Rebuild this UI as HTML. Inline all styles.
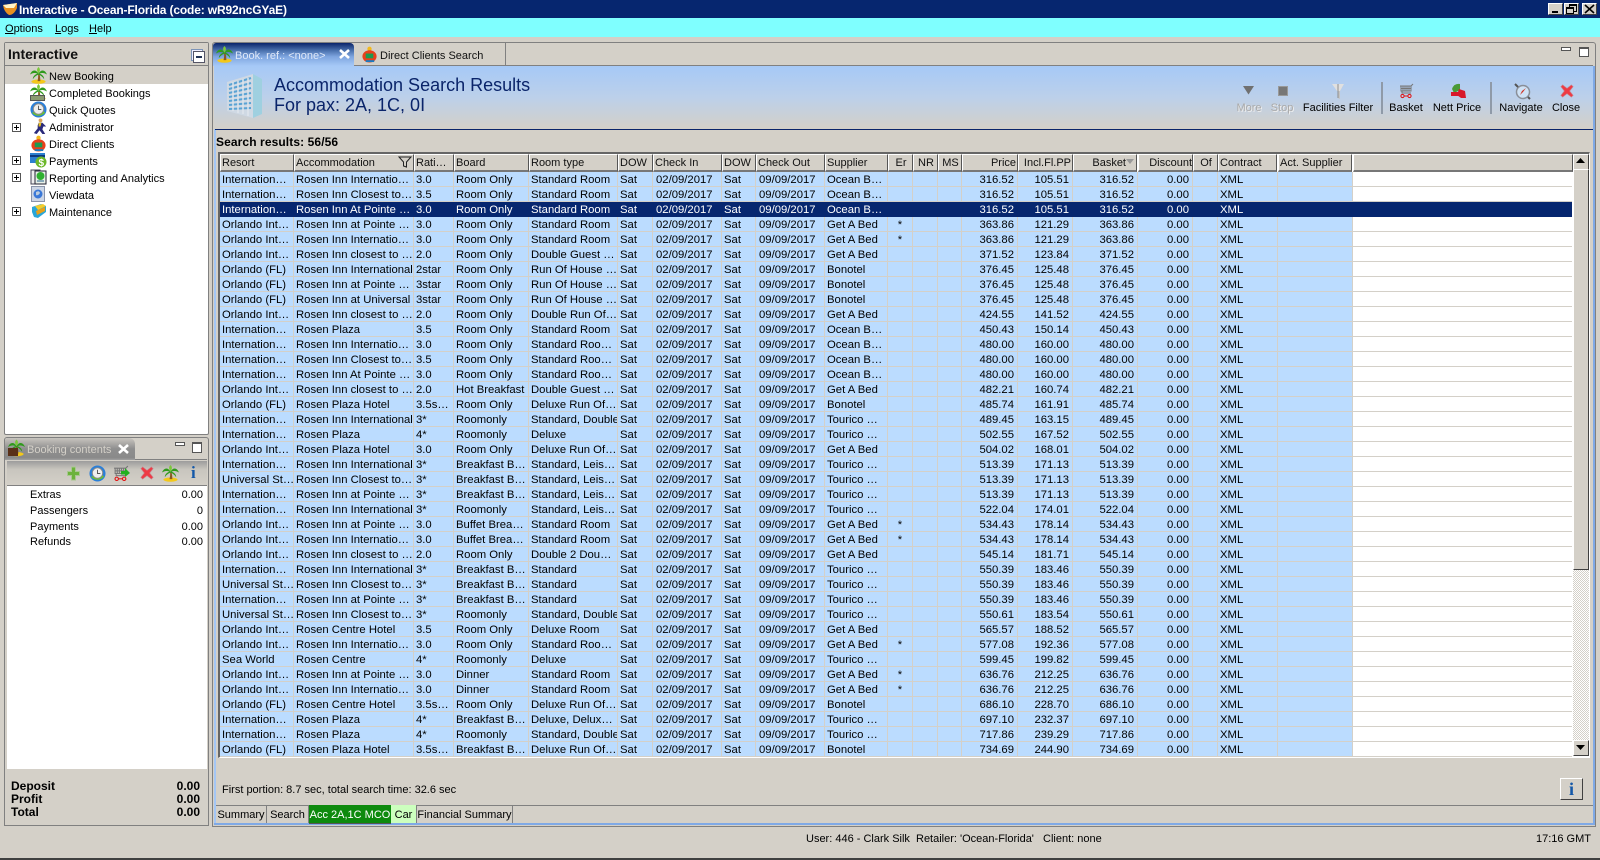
<!DOCTYPE html>
<html><head><meta charset="utf-8"><title>Interactive</title>
<style>
html,body{margin:0;padding:0}
body{width:1600px;height:860px;position:relative;overflow:hidden;background:#d4d0c8;font:11px/15px "Liberation Sans",sans-serif;color:#000}
.a{position:absolute;white-space:nowrap}
.i{position:absolute;overflow:visible}
u{text-decoration:underline}
.wb{position:absolute;top:3px;width:13px;height:10px;background:#d4d0c8;border:1px solid;border-color:#fff #404040 #404040 #fff}
.pl{position:absolute;left:12px;width:7px;height:7px;border:1px solid #555;background:#fff}
.pl:before{content:"";position:absolute;left:1px;top:3px;width:5px;height:1px;background:#000}
.pl:after{content:"";position:absolute;left:3px;top:1px;width:1px;height:5px;background:#000}
.tr{position:absolute;left:49px;white-space:nowrap;height:17px;line-height:19px}
.tbl{position:absolute;left:220px;top:172px;border-collapse:separate;border-spacing:0;table-layout:fixed;width:1352px;font-size:11.3px}
.tbl td{height:12px;padding:2px 0 0 2px;border-right:1px solid #d4d0c8;border-bottom:1px solid #d4d0c8;background:#bbdcff;overflow:hidden;white-space:nowrap;line-height:12px;box-sizing:content-box}
.tbl td:nth-child(21){background:#fff;border-right:0}
.tbl td:nth-child(7),.tbl td:nth-child(9){padding-left:3px}
.tbl td:nth-child(14),.tbl td:nth-child(15),.tbl td:nth-child(16),.tbl td:nth-child(17){text-align:right;padding:2px 3px 0 0}
.tbl td:nth-child(11){text-align:center;padding:2px 0 0}
.tbl tr.s td{background:#06266f;color:#fff;border-color:#06266f}
.h{position:absolute;top:154px;height:15px;line-height:17px;background:#d4d0c8;border-top:1px solid #fff;border-left:1px solid #fff;border-right:1px solid #555;border-bottom:2px solid #777;box-sizing:content-box;padding:0 0 0 1px;overflow:hidden;white-space:nowrap;color:#111}
.tl{position:absolute;top:101px;white-space:nowrap;transform:translateX(-50%)}
.dis{color:#aaa;text-shadow:1px 1px 0 #eee}
.bt{position:absolute;top:805px;height:18px;line-height:20px;border-right:1px solid #808080;text-align:center;white-space:nowrap}
</style></head><body>
<svg width="0" height="0" style="position:absolute">
<symbol id="palm" viewBox="0 0 18 18"><ellipse cx="9" cy="15.500" rx="7.500" ry="2.200" fill="#f3c81a"/><path d="M8 15 Q9 10 8.500 7 L10 7 Q11 11 11 15Z" fill="#8a5a20"/><path d="M9 7 C6 2 2 3 0 8 C3 6 5 6 8 7 C5 8 3 10 3 13 C5 10 7 9 9 8 C11 9 13 10 15 13 C15 10 13 8 10 7 C13 6 15 6 18 8 C16 3 12 2 9 7Z" fill="#2f9a1c"/><path d="M9 7 C7 4 7 2 9 0 C11 2 11 4 9 7Z" fill="#7cc83a"/></symbol>
<symbol id="clock" viewBox="0 0 18 18"><circle cx="9" cy="9" r="8.500" fill="#2b7fd8"/><path d="M2 12 A8.500 8.500 0 0 0 16 12 L13 10 A5 5 0 0 1 6 12Z" fill="#6cc42a"/><circle cx="9" cy="8.500" r="5.500" fill="#eee" stroke="#888"/><path d="M9 5V9H12" stroke="#555" fill="none"/></symbol>
<symbol id="xr" viewBox="0 0 16 16"><path d="M3 1 L8 5 L13 1 L15 3 L11 8 L15 13 L13 15 L8 11 L3 15 L1 13 L5 8 L1 3Z" fill="#ee3a44" stroke="#c8808a" stroke-width=".7"/></symbol>
<symbol id="cart" viewBox="0 0 16 16"><path d="M1 3H12L14 1M2 3V8H12V3M4 3V8M6 3V8M8 3V8M10 3V8M2 5.500H12M3 8L3 10H12" fill="none" stroke="#777" stroke-width="1"/><circle cx="3.500" cy="13" r="1.600" fill="none" stroke="#e01010" stroke-width="1"/><circle cx="10.500" cy="13" r="1.600" fill="none" stroke="#e01010" stroke-width="1"/><path d="M5 13H9" stroke="#e01010"/></symbol>
<symbol id="person" viewBox="0 0 18 18"><circle cx="9" cy="2.500" r="2" fill="#d9a35a"/><path d="M7 5 L11 5 L15 9 L12 9 L11 12 L14 17 L11 17 L8 13 L5 17 L2 16 L6 11 L6 8Z" fill="#2a2a7a"/><path d="M7 5 L10 5 L9 9 L7 9Z" fill="#e8c020"/></symbol>
<symbol id="client" viewBox="0 0 18 18"><circle cx="9" cy="3" r="2.300" fill="#f2b81c"/><ellipse cx="9" cy="11" rx="7.500" ry="6.500" fill="#e8401c"/><rect x="5" y="8" width="8" height="5" fill="#1c9a50"/><rect x="5" y="15" width="9" height="2" fill="#1a7ac0"/></symbol>
<symbol id="hotel" viewBox="0 0 36 46"><path d="M0 9 L26 1 L26 45 L0 38Z" fill="#cfd9e4"/><path d="M26 1 L35 6 L35 41 L26 45Z" fill="#9fd0e0"/><path d="M2 12 24 5M2 16 24 10M2 20 24 15M2 24 24 20M2 28 24 25M2 32 24 30M2 36 24 35" stroke="#5aa3d4" stroke-width="2" fill="none"/><path d="M6 9V38M11 8V40M16 6V41M21 5V43" stroke="#dfe6ec" stroke-width="1.500" fill="none"/></symbol>
</svg>

<div class="a" style="left:0;top:0;width:1600px;height:18px;background:#06266f"></div>
<svg class="i" style="left:2px;top:2px" width="16" height="14" viewBox="0 0 16 14"><path d="M1 3 L15 1 L15 6 Q12 13 7 13 Q2 10 1 3Z" fill="#e89020"/><path d="M1 3 L15 1 L12 6 L4 6Z" fill="#fff3c8"/></svg>
<div class="a" style="left:19px;top:1px;color:#fff;font:bold 12px/18px 'Liberation Sans',sans-serif;letter-spacing:-.15px">Interactive - Ocean-Florida (code: wR92ncGYaE)</div>
<div class="wb" style="left:1548px"><div style="position:absolute;left:3px;top:7px;width:6px;height:2px;background:#000"></div></div>
<div class="wb" style="left:1564px"><div style="position:absolute;left:4px;top:0;width:6px;height:5px;border:1px solid #000;border-top-width:2px"></div><div style="position:absolute;left:1px;top:3px;width:6px;height:4px;border:1px solid #000;border-top-width:2px;background:#d4d0c8"></div></div>
<div class="wb" style="left:1582px"><svg class="i" style="left:2px;top:1px" width="9" height="8"><path d="M0 0L9 8M9 0L0 8" stroke="#000" stroke-width="1.600"/></svg></div>

<div class="a" style="left:0;top:18px;width:1600px;height:19px;background:#7fffff"></div>
<div class="a" style="left:5px;top:22px"><u>O</u>ptions</div>
<div class="a" style="left:55px;top:22px"><u>L</u>ogs</div>
<div class="a" style="left:89px;top:22px"><u>H</u>elp</div>

<!-- Left top panel -->
<div class="a" style="left:4px;top:42px;width:203px;height:391px;background:#fff;border:1px solid #808080;border-radius:2px"></div>
<div class="a" style="left:5px;top:43px;width:203px;height:22px;background:#d4d0c8;border-bottom:1px solid #808080"></div>
<div class="a" style="left:8px;top:46px;font:bold 14px/17px 'Liberation Sans',sans-serif;color:#111">Interactive</div>
<div class="a" style="left:191px;top:49px;width:10px;height:10px;border:1px solid #7c94b8;background:#eef"></div>
<div class="a" style="left:193px;top:51px;width:10px;height:10px;border:1px solid #556;background:#fff"><div style="position:absolute;left:2px;top:4px;width:6px;height:2px;background:#235"></div></div>
<div class="a" style="left:5px;top:66px;width:203px;height:18px;background:#d4d0c8"></div>
<svg class="i" style="left:30px;top:67px" width="17" height="17"><use href="#palm"/></svg>
<div class="tr" style="top:68px">New Booking</div>
<svg class="i" style="left:30px;top:84px" width="17" height="17"><use href="#palm"/></svg><div class="a" style="left:30px;top:95px;width:15px;height:6px;background:#8a9a70;border:1px solid #555;box-sizing:border-box"></div>
<div class="tr" style="top:85px">Completed Bookings</div>
<svg class="i" style="left:30px;top:101px" width="17" height="17"><use href="#clock"/></svg>
<div class="tr" style="top:102px">Quick Quotes</div>
<div class="pl" style="top:123px"></div>
<svg class="i" style="left:32px;top:118px" width="17" height="17"><use href="#person"/></svg>
<div class="tr" style="top:119px">Administrator</div>
<svg class="i" style="left:30px;top:135px" width="17" height="17"><use href="#client"/></svg>
<div class="tr" style="top:136px">Direct Clients</div>
<div class="pl" style="top:156px"></div>
<svg class="i" style="left:30px;top:152px" width="17" height="16" viewBox="0 0 17 16"><rect x="0" y="1" width="15" height="10" fill="#2a7fd0"/><rect x="0" y="3" width="15" height="2" fill="#0a3a80"/><circle cx="11" cy="10" r="5.500" fill="#6cb82a"/><text x="8.500" y="14" font-size="10" font-weight="bold" fill="#fff" font-family="Liberation Sans">$</text></svg>
<div class="tr" style="top:153px">Payments</div>
<div class="pl" style="top:173px"></div>
<svg class="i" style="left:31px;top:169px" width="16" height="16"><rect x="0" y="1" width="9" height="14" fill="#eee" stroke="#445"/><rect x="4" y="2" width="11" height="13" fill="#e8f0e8" stroke="#223"/><circle cx="9.500" cy="7" r="4" fill="#2fb030"/><rect x="6" y="11" width="7" height="2" fill="#8ab"/></svg>
<div class="tr" style="top:170px">Reporting and Analytics</div>
<svg class="i" style="left:31px;top:186px" width="15" height="16"><rect x=".5" y=".5" width="13" height="15" fill="#cdd6e6" stroke="#8a94aa"/><circle cx="7" cy="8" r="4.500" fill="#3a78d8"/><path d="M5 6 Q8 4 9 7 Q7 10 5 9Z" fill="#bcd"/></svg>
<div class="tr" style="top:187px">Viewdata</div>
<div class="pl" style="top:207px"></div>
<svg class="i" style="left:31px;top:203px" width="16" height="16"><path d="M1 4 L10 1 L15 3 L15 9 L7 15 L3 14 L1 9Z" fill="#2aa6d8"/><path d="M4 3 L12 1 L15 3 L7 7Z" fill="#f4cc2a"/><path d="M5 8 L14 4 L14 8 L6 12Z" fill="#e8a018"/></svg>
<div class="tr" style="top:204px">Maintenance</div>

<!-- Left bottom panel -->
<div class="a" style="left:4px;top:437px;width:203px;height:387px;background:#d4d0c8;border:1px solid #808080;border-radius:3px 3px 0 0"></div>
<div class="a" style="left:5px;top:438px;width:130px;height:22px;background:linear-gradient(#c8c5bf,#8e8e8e 50%,#8a8a8a 90%,#a0a0a0);border-radius:2px 6px 0 0"></div>
<svg class="i" style="left:8px;top:439px" width="17" height="18"><use href="#palm"/><rect x="0" y="9" width="10" height="8" fill="#5a3018"/></svg>
<div class="a" style="left:27px;top:443px;color:#d4d0c8">Booking contents</div>
<svg class="i" style="left:118px;top:444px" width="11" height="10"><path d="M1 1L10 9M10 1L1 9" stroke="#fff" stroke-width="2.600"/></svg>
<div class="a" style="left:135px;top:459px;width:72px;height:1px;background:#808080"></div>
<div class="a" style="left:175px;top:442px;width:8px;height:2px;border:1px solid #555;background:#fff"></div>
<div class="a" style="left:192px;top:442px;width:8px;height:8px;border:1px solid #555;border-top-width:2px;background:#fff"></div>
<div class="a" style="left:7px;top:461px;width:200px;height:24px;background:linear-gradient(#9c9c9c,#c8c5be 35%,#d4d0c8);border-bottom:1px solid #808080"></div>
<svg class="i" style="left:67px;top:466px" width="13" height="15"><path d="M4.500 1H8.500V5.500H12.500V9.500H8.500V14H4.500V9.500H.5V5.500H4.500Z" fill="#6cb23c" stroke="#a8c890"/></svg>
<svg class="i" style="left:89px;top:465px" width="17" height="17"><use href="#clock"/></svg>
<svg class="i" style="left:113px;top:465px" width="17" height="17"><use href="#cart"/><path d="M8 6H12V3L17 8L12 12V9.500H8Z" fill="#22b020"/></svg>
<svg class="i" style="left:140px;top:466px" width="14" height="14"><use href="#xr"/></svg>
<svg class="i" style="left:162px;top:465px" width="17" height="17"><use href="#palm"/></svg>
<div class="a" style="left:191px;top:464px;color:#1458a8;font:bold 17px/18px 'Liberation Serif',serif">i</div>
<div class="a" style="left:7px;top:486px;width:200px;height:283px;background:#fff"></div>
<div class="a" style="left:30px;top:488px">Extras</div><div class="a" style="right:1397px;top:488px">0.00</div>
<div class="a" style="left:30px;top:504px">Passengers</div><div class="a" style="right:1397px;top:504px">0</div>
<div class="a" style="left:30px;top:520px">Payments</div><div class="a" style="right:1397px;top:520px">0.00</div>
<div class="a" style="left:30px;top:535px">Refunds</div><div class="a" style="right:1397px;top:535px">0.00</div>
<div class="a" style="left:11px;top:780px;font:bold 12px/13px 'Liberation Sans',sans-serif">Deposit<br>Profit<br>Total</div>
<div class="a" style="right:1400px;top:780px;font:bold 12px/13px 'Liberation Sans',sans-serif;text-align:right">0.00<br>0.00<br>0.00</div>

<!-- Right panel -->
<div class="a" style="left:212px;top:42px;width:1382px;height:783px;background:#d4d0c8;border:1px solid #808080;border-radius:3px 3px 0 0"></div>
<div class="a" style="left:213px;top:65px;width:1380px;height:1px;background:#808080"></div>
<div class="a" style="left:214px;top:66px;width:2px;height:758px;background:#a3c6f5"></div>
<div class="a" style="left:1593px;top:66px;width:2px;height:759px;background:#7fa9e6"></div>
<div class="a" style="left:214px;top:823px;width:1381px;height:2px;background:#7fa9e6"></div>
<div class="a" style="left:214px;top:66px;width:1379px;height:63px;background:linear-gradient(#a6c9f7,#bcd0ea 50%,#d4d0c8)"></div>
<div class="a" style="left:215px;top:129px;width:1378px;height:1px;background:#0a246a"></div>
<!-- tabs -->
<div class="a" style="left:213px;top:43px;width:141px;height:23px;background:linear-gradient(#0a246a,#456ba8 30%,#7fa6e0 60%,#a6c9f7);border-radius:3px 4px 0 0"></div>
<svg class="i" style="left:216px;top:46px" width="17" height="17"><use href="#palm"/></svg>
<div class="a" style="left:235px;top:49px;color:#dfe8f8">Book. ref.: &lt;none&gt;</div>
<svg class="i" style="left:339px;top:49px" width="11" height="10"><path d="M1 1L10 9M10 1L1 9" stroke="#fff" stroke-width="2.600"/></svg>
<div class="a" style="left:505px;top:43px;width:1px;height:22px;background:#808080"></div>
<svg class="i" style="left:361px;top:46px" width="17" height="17"><use href="#client"/></svg>
<div class="a" style="left:380px;top:49px;color:#111">Direct Clients Search</div>
<div class="a" style="left:1561px;top:47px;width:8px;height:2px;border:1px solid #555;background:#fff"></div>
<div class="a" style="left:1579px;top:47px;width:8px;height:7px;border:1px solid #555;border-top-width:2px;background:#fff"></div>
<!-- heading -->
<svg class="i" style="left:227px;top:73px" width="36" height="46"><use href="#hotel"/></svg>
<div class="a" style="left:274px;top:74px;color:#0a246a;font:18px/22px 'Liberation Sans',sans-serif">Accommodation Search Results</div>
<div class="a" style="left:274px;top:94px;color:#0a246a;font:18px/22px 'Liberation Sans',sans-serif">For pax: 2A, 1C, 0I</div>
<!-- toolbar -->
<svg class="i" style="left:1243px;top:85px" width="12" height="10"><path d="M0 1H11L5.500 9.500Z" fill="#707070"/></svg>
<div class="a" style="left:1278px;top:86px;width:8px;height:8px;background:#777;border:1px solid #999"></div>
<svg class="i" style="left:1332px;top:83px" width="13" height="17"><path d="M0 1H12L8 8V16L5.500 15V8Z" fill="#c4c4c4"/><path d="M0 1H12L8 8H5Z" fill="#e0e0e0"/><path d="M6 1V15" stroke="#8e8e8e"/></svg>
<svg class="i" style="left:1399px;top:83px" width="16" height="16"><use href="#cart"/></svg>
<svg class="i" style="left:1450px;top:83px" width="17" height="17" viewBox="0 0 17 17"><path d="M2 6 Q4 0 10 1 L10 7 L4 10Z" fill="#4a9a36"/><rect x="1" y="9" width="8" height="4" fill="#d8182a"/><path d="M9 6 L15 8 L16 15 L11 15 L7 12Z" fill="#d8182a"/></svg>
<svg class="i" style="left:1514px;top:83px" width="17" height="17" viewBox="0 0 17 17"><circle cx="9" cy="9" r="6.500" fill="#cfe2f5" stroke="#8a8f98" stroke-width="1.500"/><path d="M12 5 L9 9 L6 12 L8 8Z" fill="#d03020"/><path d="M1 1 L4 4M14 14 L16 16" stroke="#555" stroke-width="2"/></svg>
<svg class="i" style="left:1560px;top:84px" width="14" height="14"><use href="#xr"/></svg>
<div class="tl dis" style="left:1249px">More</div>
<div class="tl dis" style="left:1282px">Stop</div>
<div class="tl" style="left:1338px">Facilities Filter</div>
<div class="a" style="left:1381px;top:82px;width:2px;height:32px;background:#8f9aa8"></div>
<div class="tl" style="left:1406px">Basket</div>
<div class="tl" style="left:1457px">Nett Price</div>
<div class="a" style="left:1490px;top:82px;width:2px;height:32px;background:#8f9aa8"></div>
<div class="tl" style="left:1521px">Navigate</div>
<div class="tl" style="left:1566px">Close</div>

<div class="a" style="left:216px;top:135px;font:bold 12px/15px 'Liberation Sans',sans-serif;letter-spacing:.1px">Search results: 56/56</div>

<!-- table frame -->
<div class="a" style="left:218px;top:152px;width:1372px;height:606px;background:#fff;border-top:2px solid #666;border-left:2px solid #666;border-right:1px solid #fff;border-bottom:1px solid #fff;box-sizing:border-box"></div>

<div class="h" style="left:220px;width:71px">Resort</div>
<div class="h" style="left:294px;width:117px">Accommodation</div>
<svg class="i" style="left:398px;top:156px" width="14" height="12"><path d="M1 1H13L8.500 6V11L5.500 10V6Z" fill="none" stroke="#222"/></svg>
<div class="h" style="left:414px;width:37px">Rati…</div>
<div class="h" style="left:454px;width:72px">Board</div>
<div class="h" style="left:529px;width:86px">Room type</div>
<div class="h" style="left:618px;width:32px">DOW</div>
<div class="h" style="left:653px;width:66px">Check In</div>
<div class="h" style="left:722px;width:31px">DOW</div>
<div class="h" style="left:756px;width:66px">Check Out</div>
<div class="h" style="left:825px;width:60px">Supplier</div>
<div class="h" style="left:888px;width:22px;text-align:center">Er</div>
<div class="h" style="left:913px;width:22px;text-align:center">NR</div>
<div class="h" style="left:938px;width:21px;text-align:center">MS</div>
<div class="h" style="left:962px;width:52px;text-align:right;padding-right:1px">Price</div>
<div class="h" style="left:1018px;width:51px;text-align:right;padding-right:1px">Incl.Fl.PP</div>
<div class="h" style="left:1073px;text-align:right;padding-right:10px;width:51px">Basket</div>
<svg class="i" style="left:1126px;top:159px" width="9" height="6"><path d="M0 0H8L4 5Z" fill="#999"/></svg>
<div class="h" style="left:1138px;width:52px;text-align:right">Discount</div>
<div class="h" style="left:1193px;width:22px;text-align:center">Of</div>
<div class="h" style="left:1218px;width:56px">Contract</div>
<div class="h" style="left:1278px;width:71px">Act. Supplier</div>
<div class="h" style="left:1353px;width:217px"></div>

<table class="tbl">
<colgroup><col style="width:74px"><col style="width:120px"><col style="width:40px"><col style="width:75px"><col style="width:89px"><col style="width:35px"><col style="width:69px"><col style="width:34px"><col style="width:69px"><col style="width:63px"><col style="width:25px"><col style="width:25px"><col style="width:24px"><col style="width:56px"><col style="width:55px"><col style="width:65px"><col style="width:55px"><col style="width:25px"><col style="width:60px"><col style="width:75px"><col style="width:219px"></colgroup>
<tr><td>Internation…</td><td>Rosen Inn Internatio…</td><td>3.0</td><td>Room Only</td><td>Standard Room</td><td>Sat</td><td>02/09/2017</td><td>Sat</td><td>09/09/2017</td><td>Ocean B…</td><td></td><td></td><td></td><td>316.52</td><td>105.51</td><td>316.52</td><td>0.00</td><td></td><td>XML</td><td></td><td></td></tr>
<tr><td>Internation…</td><td>Rosen Inn Closest to…</td><td>3.5</td><td>Room Only</td><td>Standard Room</td><td>Sat</td><td>02/09/2017</td><td>Sat</td><td>09/09/2017</td><td>Ocean B…</td><td></td><td></td><td></td><td>316.52</td><td>105.51</td><td>316.52</td><td>0.00</td><td></td><td>XML</td><td></td><td></td></tr>
<tr class="s"><td>Internation…</td><td>Rosen Inn At Pointe …</td><td>3.0</td><td>Room Only</td><td>Standard Room</td><td>Sat</td><td>02/09/2017</td><td>Sat</td><td>09/09/2017</td><td>Ocean B…</td><td></td><td></td><td></td><td>316.52</td><td>105.51</td><td>316.52</td><td>0.00</td><td></td><td>XML</td><td></td><td></td></tr>
<tr><td>Orlando Int…</td><td>Rosen Inn at Pointe …</td><td>3.0</td><td>Room Only</td><td>Standard Room</td><td>Sat</td><td>02/09/2017</td><td>Sat</td><td>09/09/2017</td><td>Get A Bed</td><td>*</td><td></td><td></td><td>363.86</td><td>121.29</td><td>363.86</td><td>0.00</td><td></td><td>XML</td><td></td><td></td></tr>
<tr><td>Orlando Int…</td><td>Rosen Inn Internatio…</td><td>3.0</td><td>Room Only</td><td>Standard Room</td><td>Sat</td><td>02/09/2017</td><td>Sat</td><td>09/09/2017</td><td>Get A Bed</td><td>*</td><td></td><td></td><td>363.86</td><td>121.29</td><td>363.86</td><td>0.00</td><td></td><td>XML</td><td></td><td></td></tr>
<tr><td>Orlando Int…</td><td>Rosen Inn closest to …</td><td>2.0</td><td>Room Only</td><td>Double Guest …</td><td>Sat</td><td>02/09/2017</td><td>Sat</td><td>09/09/2017</td><td>Get A Bed</td><td></td><td></td><td></td><td>371.52</td><td>123.84</td><td>371.52</td><td>0.00</td><td></td><td>XML</td><td></td><td></td></tr>
<tr><td>Orlando (FL)</td><td>Rosen Inn International</td><td>2star</td><td>Room Only</td><td>Run Of House …</td><td>Sat</td><td>02/09/2017</td><td>Sat</td><td>09/09/2017</td><td>Bonotel</td><td></td><td></td><td></td><td>376.45</td><td>125.48</td><td>376.45</td><td>0.00</td><td></td><td>XML</td><td></td><td></td></tr>
<tr><td>Orlando (FL)</td><td>Rosen Inn at Pointe …</td><td>3star</td><td>Room Only</td><td>Run Of House …</td><td>Sat</td><td>02/09/2017</td><td>Sat</td><td>09/09/2017</td><td>Bonotel</td><td></td><td></td><td></td><td>376.45</td><td>125.48</td><td>376.45</td><td>0.00</td><td></td><td>XML</td><td></td><td></td></tr>
<tr><td>Orlando (FL)</td><td>Rosen Inn at Universal</td><td>3star</td><td>Room Only</td><td>Run Of House …</td><td>Sat</td><td>02/09/2017</td><td>Sat</td><td>09/09/2017</td><td>Bonotel</td><td></td><td></td><td></td><td>376.45</td><td>125.48</td><td>376.45</td><td>0.00</td><td></td><td>XML</td><td></td><td></td></tr>
<tr><td>Orlando Int…</td><td>Rosen Inn closest to …</td><td>2.0</td><td>Room Only</td><td>Double Run Of…</td><td>Sat</td><td>02/09/2017</td><td>Sat</td><td>09/09/2017</td><td>Get A Bed</td><td></td><td></td><td></td><td>424.55</td><td>141.52</td><td>424.55</td><td>0.00</td><td></td><td>XML</td><td></td><td></td></tr>
<tr><td>Internation…</td><td>Rosen Plaza</td><td>3.5</td><td>Room Only</td><td>Standard Room</td><td>Sat</td><td>02/09/2017</td><td>Sat</td><td>09/09/2017</td><td>Ocean B…</td><td></td><td></td><td></td><td>450.43</td><td>150.14</td><td>450.43</td><td>0.00</td><td></td><td>XML</td><td></td><td></td></tr>
<tr><td>Internation…</td><td>Rosen Inn Internatio…</td><td>3.0</td><td>Room Only</td><td>Standard Roo…</td><td>Sat</td><td>02/09/2017</td><td>Sat</td><td>09/09/2017</td><td>Ocean B…</td><td></td><td></td><td></td><td>480.00</td><td>160.00</td><td>480.00</td><td>0.00</td><td></td><td>XML</td><td></td><td></td></tr>
<tr><td>Internation…</td><td>Rosen Inn Closest to…</td><td>3.5</td><td>Room Only</td><td>Standard Roo…</td><td>Sat</td><td>02/09/2017</td><td>Sat</td><td>09/09/2017</td><td>Ocean B…</td><td></td><td></td><td></td><td>480.00</td><td>160.00</td><td>480.00</td><td>0.00</td><td></td><td>XML</td><td></td><td></td></tr>
<tr><td>Internation…</td><td>Rosen Inn At Pointe …</td><td>3.0</td><td>Room Only</td><td>Standard Roo…</td><td>Sat</td><td>02/09/2017</td><td>Sat</td><td>09/09/2017</td><td>Ocean B…</td><td></td><td></td><td></td><td>480.00</td><td>160.00</td><td>480.00</td><td>0.00</td><td></td><td>XML</td><td></td><td></td></tr>
<tr><td>Orlando Int…</td><td>Rosen Inn closest to …</td><td>2.0</td><td>Hot Breakfast</td><td>Double Guest …</td><td>Sat</td><td>02/09/2017</td><td>Sat</td><td>09/09/2017</td><td>Get A Bed</td><td></td><td></td><td></td><td>482.21</td><td>160.74</td><td>482.21</td><td>0.00</td><td></td><td>XML</td><td></td><td></td></tr>
<tr><td>Orlando (FL)</td><td>Rosen Plaza Hotel</td><td>3.5s…</td><td>Room Only</td><td>Deluxe Run Of…</td><td>Sat</td><td>02/09/2017</td><td>Sat</td><td>09/09/2017</td><td>Bonotel</td><td></td><td></td><td></td><td>485.74</td><td>161.91</td><td>485.74</td><td>0.00</td><td></td><td>XML</td><td></td><td></td></tr>
<tr><td>Internation…</td><td>Rosen Inn International</td><td>3*</td><td>Roomonly</td><td>Standard, Double</td><td>Sat</td><td>02/09/2017</td><td>Sat</td><td>09/09/2017</td><td>Tourico …</td><td></td><td></td><td></td><td>489.45</td><td>163.15</td><td>489.45</td><td>0.00</td><td></td><td>XML</td><td></td><td></td></tr>
<tr><td>Internation…</td><td>Rosen Plaza</td><td>4*</td><td>Roomonly</td><td>Deluxe</td><td>Sat</td><td>02/09/2017</td><td>Sat</td><td>09/09/2017</td><td>Tourico …</td><td></td><td></td><td></td><td>502.55</td><td>167.52</td><td>502.55</td><td>0.00</td><td></td><td>XML</td><td></td><td></td></tr>
<tr><td>Orlando Int…</td><td>Rosen Plaza Hotel</td><td>3.0</td><td>Room Only</td><td>Deluxe Run Of…</td><td>Sat</td><td>02/09/2017</td><td>Sat</td><td>09/09/2017</td><td>Get A Bed</td><td></td><td></td><td></td><td>504.02</td><td>168.01</td><td>504.02</td><td>0.00</td><td></td><td>XML</td><td></td><td></td></tr>
<tr><td>Internation…</td><td>Rosen Inn International</td><td>3*</td><td>Breakfast B…</td><td>Standard, Leis…</td><td>Sat</td><td>02/09/2017</td><td>Sat</td><td>09/09/2017</td><td>Tourico …</td><td></td><td></td><td></td><td>513.39</td><td>171.13</td><td>513.39</td><td>0.00</td><td></td><td>XML</td><td></td><td></td></tr>
<tr><td>Universal St…</td><td>Rosen Inn Closest to…</td><td>3*</td><td>Breakfast B…</td><td>Standard, Leis…</td><td>Sat</td><td>02/09/2017</td><td>Sat</td><td>09/09/2017</td><td>Tourico …</td><td></td><td></td><td></td><td>513.39</td><td>171.13</td><td>513.39</td><td>0.00</td><td></td><td>XML</td><td></td><td></td></tr>
<tr><td>Internation…</td><td>Rosen Inn at Pointe …</td><td>3*</td><td>Breakfast B…</td><td>Standard, Leis…</td><td>Sat</td><td>02/09/2017</td><td>Sat</td><td>09/09/2017</td><td>Tourico …</td><td></td><td></td><td></td><td>513.39</td><td>171.13</td><td>513.39</td><td>0.00</td><td></td><td>XML</td><td></td><td></td></tr>
<tr><td>Internation…</td><td>Rosen Inn International</td><td>3*</td><td>Roomonly</td><td>Standard, Leis…</td><td>Sat</td><td>02/09/2017</td><td>Sat</td><td>09/09/2017</td><td>Tourico …</td><td></td><td></td><td></td><td>522.04</td><td>174.01</td><td>522.04</td><td>0.00</td><td></td><td>XML</td><td></td><td></td></tr>
<tr><td>Orlando Int…</td><td>Rosen Inn at Pointe …</td><td>3.0</td><td>Buffet Brea…</td><td>Standard Room</td><td>Sat</td><td>02/09/2017</td><td>Sat</td><td>09/09/2017</td><td>Get A Bed</td><td>*</td><td></td><td></td><td>534.43</td><td>178.14</td><td>534.43</td><td>0.00</td><td></td><td>XML</td><td></td><td></td></tr>
<tr><td>Orlando Int…</td><td>Rosen Inn Internatio…</td><td>3.0</td><td>Buffet Brea…</td><td>Standard Room</td><td>Sat</td><td>02/09/2017</td><td>Sat</td><td>09/09/2017</td><td>Get A Bed</td><td>*</td><td></td><td></td><td>534.43</td><td>178.14</td><td>534.43</td><td>0.00</td><td></td><td>XML</td><td></td><td></td></tr>
<tr><td>Orlando Int…</td><td>Rosen Inn closest to …</td><td>2.0</td><td>Room Only</td><td>Double 2 Dou…</td><td>Sat</td><td>02/09/2017</td><td>Sat</td><td>09/09/2017</td><td>Get A Bed</td><td></td><td></td><td></td><td>545.14</td><td>181.71</td><td>545.14</td><td>0.00</td><td></td><td>XML</td><td></td><td></td></tr>
<tr><td>Internation…</td><td>Rosen Inn International</td><td>3*</td><td>Breakfast B…</td><td>Standard</td><td>Sat</td><td>02/09/2017</td><td>Sat</td><td>09/09/2017</td><td>Tourico …</td><td></td><td></td><td></td><td>550.39</td><td>183.46</td><td>550.39</td><td>0.00</td><td></td><td>XML</td><td></td><td></td></tr>
<tr><td>Universal St…</td><td>Rosen Inn Closest to…</td><td>3*</td><td>Breakfast B…</td><td>Standard</td><td>Sat</td><td>02/09/2017</td><td>Sat</td><td>09/09/2017</td><td>Tourico …</td><td></td><td></td><td></td><td>550.39</td><td>183.46</td><td>550.39</td><td>0.00</td><td></td><td>XML</td><td></td><td></td></tr>
<tr><td>Internation…</td><td>Rosen Inn at Pointe …</td><td>3*</td><td>Breakfast B…</td><td>Standard</td><td>Sat</td><td>02/09/2017</td><td>Sat</td><td>09/09/2017</td><td>Tourico …</td><td></td><td></td><td></td><td>550.39</td><td>183.46</td><td>550.39</td><td>0.00</td><td></td><td>XML</td><td></td><td></td></tr>
<tr><td>Universal St…</td><td>Rosen Inn Closest to…</td><td>3*</td><td>Roomonly</td><td>Standard, Double</td><td>Sat</td><td>02/09/2017</td><td>Sat</td><td>09/09/2017</td><td>Tourico …</td><td></td><td></td><td></td><td>550.61</td><td>183.54</td><td>550.61</td><td>0.00</td><td></td><td>XML</td><td></td><td></td></tr>
<tr><td>Orlando Int…</td><td>Rosen Centre Hotel</td><td>3.5</td><td>Room Only</td><td>Deluxe Room</td><td>Sat</td><td>02/09/2017</td><td>Sat</td><td>09/09/2017</td><td>Get A Bed</td><td></td><td></td><td></td><td>565.57</td><td>188.52</td><td>565.57</td><td>0.00</td><td></td><td>XML</td><td></td><td></td></tr>
<tr><td>Orlando Int…</td><td>Rosen Inn Internatio…</td><td>3.0</td><td>Room Only</td><td>Standard Roo…</td><td>Sat</td><td>02/09/2017</td><td>Sat</td><td>09/09/2017</td><td>Get A Bed</td><td>*</td><td></td><td></td><td>577.08</td><td>192.36</td><td>577.08</td><td>0.00</td><td></td><td>XML</td><td></td><td></td></tr>
<tr><td>Sea World</td><td>Rosen Centre</td><td>4*</td><td>Roomonly</td><td>Deluxe</td><td>Sat</td><td>02/09/2017</td><td>Sat</td><td>09/09/2017</td><td>Tourico …</td><td></td><td></td><td></td><td>599.45</td><td>199.82</td><td>599.45</td><td>0.00</td><td></td><td>XML</td><td></td><td></td></tr>
<tr><td>Orlando Int…</td><td>Rosen Inn at Pointe …</td><td>3.0</td><td>Dinner</td><td>Standard Room</td><td>Sat</td><td>02/09/2017</td><td>Sat</td><td>09/09/2017</td><td>Get A Bed</td><td>*</td><td></td><td></td><td>636.76</td><td>212.25</td><td>636.76</td><td>0.00</td><td></td><td>XML</td><td></td><td></td></tr>
<tr><td>Orlando Int…</td><td>Rosen Inn Internatio…</td><td>3.0</td><td>Dinner</td><td>Standard Room</td><td>Sat</td><td>02/09/2017</td><td>Sat</td><td>09/09/2017</td><td>Get A Bed</td><td>*</td><td></td><td></td><td>636.76</td><td>212.25</td><td>636.76</td><td>0.00</td><td></td><td>XML</td><td></td><td></td></tr>
<tr><td>Orlando (FL)</td><td>Rosen Centre Hotel</td><td>3.5s…</td><td>Room Only</td><td>Deluxe Run Of…</td><td>Sat</td><td>02/09/2017</td><td>Sat</td><td>09/09/2017</td><td>Bonotel</td><td></td><td></td><td></td><td>686.10</td><td>228.70</td><td>686.10</td><td>0.00</td><td></td><td>XML</td><td></td><td></td></tr>
<tr><td>Internation…</td><td>Rosen Plaza</td><td>4*</td><td>Breakfast B…</td><td>Deluxe, Delux…</td><td>Sat</td><td>02/09/2017</td><td>Sat</td><td>09/09/2017</td><td>Tourico …</td><td></td><td></td><td></td><td>697.10</td><td>232.37</td><td>697.10</td><td>0.00</td><td></td><td>XML</td><td></td><td></td></tr>
<tr><td>Internation…</td><td>Rosen Plaza</td><td>4*</td><td>Roomonly</td><td>Standard, Double</td><td>Sat</td><td>02/09/2017</td><td>Sat</td><td>09/09/2017</td><td>Tourico …</td><td></td><td></td><td></td><td>717.86</td><td>239.29</td><td>717.86</td><td>0.00</td><td></td><td>XML</td><td></td><td></td></tr>
<tr><td>Orlando (FL)</td><td>Rosen Plaza Hotel</td><td>3.5s…</td><td>Breakfast B…</td><td>Deluxe Run Of…</td><td>Sat</td><td>02/09/2017</td><td>Sat</td><td>09/09/2017</td><td>Bonotel</td><td></td><td></td><td></td><td>734.69</td><td>244.90</td><td>734.69</td><td>0.00</td><td></td><td>XML</td><td></td><td></td></tr>
</table>

<!-- scrollbar -->
<div class="a" style="left:1573px;top:154px;width:16px;height:602px;background:repeating-conic-gradient(#d4d0c8 0 25%,#fff 0 50%) 0 0/2px 2px"></div>
<div class="a" style="left:1573px;top:154px;width:14px;height:14px;background:#d4d0c8;border:1px solid;border-color:#fff #404040 #404040 #fff"></div>
<svg class="i" style="left:1576px;top:158px" width="10" height="6"><path d="M0 5H9L4.500 0Z" fill="#000"/></svg>
<div class="a" style="left:1573px;top:169px;width:14px;height:399px;background:#d4d0c8;border:1px solid;border-color:#fff #404040 #404040 #fff"></div>
<div class="a" style="left:1573px;top:740px;width:14px;height:14px;background:#d4d0c8;border:1px solid;border-color:#fff #404040 #404040 #fff"></div>
<svg class="i" style="left:1576px;top:745px" width="10" height="6"><path d="M0 0H9L4.500 5Z" fill="#000"/></svg>

<!-- footer -->
<div class="a" style="left:222px;top:783px">First portion: 8.7 sec, total search time: 32.6 sec</div>
<div class="a" style="left:1560px;top:778px;width:21px;height:20px;background:#d4d0c8;border:1px solid;border-color:#fff #404040 #404040 #fff;text-align:center;color:#1458a8;font:bold 18px/20px 'Liberation Serif',serif">i</div>
<div class="a" style="left:216px;top:805px;width:1377px;height:1px;background:#808080"></div>
<div class="bt" style="left:216px;width:50px">Summary</div>
<div class="bt" style="left:267px;width:41px">Search</div>
<div class="bt" style="left:309px;width:82px;background:#0e8a0e;color:#fff;border:0;border-bottom:1px solid #555">Acc 2A,1C MCO</div>
<div class="bt" style="left:391px;width:25px;background:#ccffbe">Car</div>
<div class="bt" style="left:417px;width:95px">Financial Summary</div>

<!-- status -->
<div class="a" style="left:806px;top:832px">User: 446 - Clark Silk</div>
<div class="a" style="left:916px;top:832px">Retailer: 'Ocean-Florida'</div>
<div class="a" style="left:1043px;top:832px">Client: none</div>
<div class="a" style="right:9px;top:832px">17:16 GMT</div>
<div class="a" style="left:0;top:858px;width:1600px;height:2px;background:#404040"></div>
</body></html>
